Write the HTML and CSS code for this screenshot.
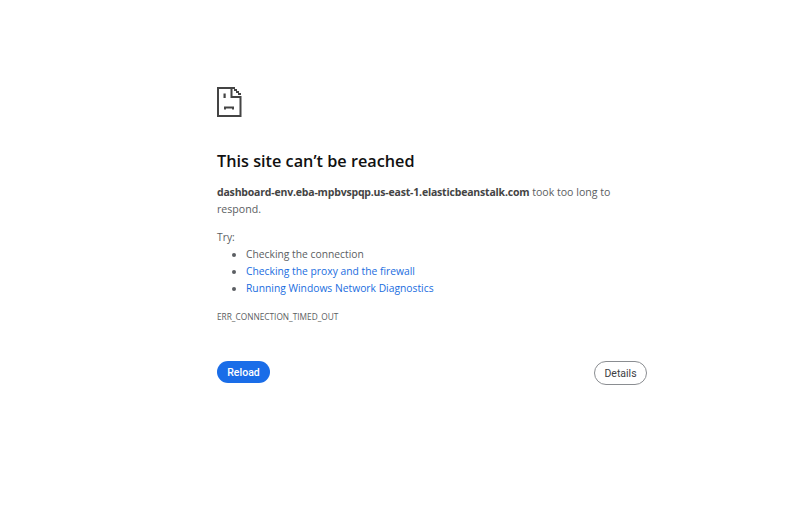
FILE: index.html
```html
<!DOCTYPE html>
<html lang="en">
<head>
    <meta charset="UTF-8">
    <meta name="viewport" content="width=device-width, initial-scale=1.0">
    <title>This site can't be reached</title>
    <link rel="stylesheet" href="styles.css">
</head>
<body>
    <div class="container">
        <svg class="error-icon" width="25" height="30" viewBox="0 0 25 30">
            <path d="M1 1H14.500V10H23.500V29H1Z" fill="none" stroke="#444" stroke-width="2"/>
            <path d="M15 1H17V3H19V5H21V7H23V10" fill="none" stroke="#444" stroke-width="2" stroke-dasharray="3 1"/>
            <rect x="6.500" y="6.500" width="2.200" height="4.500" fill="#444"/>
            <path d="M8 22.500V20.500H16V22.500" fill="none" stroke="#444" stroke-width="2"/>
        </svg>

        <h1>This site can’t be reached</h1>
        <p class="summary"><strong>dashboard-env.eba-mpbvspqp.us-east-1.elasticbeanstalk.com</strong> took too long to respond.</p>

        <div class="suggestions">
            <div class="try-label">Try:</div>
            <ul>
                <li>Checking the connection</li>
                <li><a href="#">Checking the proxy and the firewall</a></li>
                <li><a href="#">Running Windows Network Diagnostics</a></li>
            </ul>
        </div>

        <div class="error-code">ERR_CONNECTION_TIMED_OUT</div>

        <div class="buttons">
            <button class="reload">Reload</button>
            <button class="details">Details</button>
        </div>
    </div>
</body>
</html>
```

FILE: styles.css
```css
body {
    font-family: "Open Sans", "Noto Sans", sans-serif;
    background-color: white;
    margin: 0;
    padding: 0;
    color: #5b5e62;
}

.container {
    width: 430px;
    margin-left: 217px;
    padding-top: 87px;
}

.error-icon {
    display: block;
}

h1 {
    margin: 34px 0 0;
    font-size: 16.25px;
    line-height: 21px;
    font-weight: 600;
    color: #111;
}

.summary {
    margin: 12px 0 0;
    font-size: 10.6px;
    line-height: 17px;
}

.summary strong {
    color: #444;
    font-size: 10.5px;
    letter-spacing: -0.19px;
}

.suggestions {
    margin-top: 11px;
    font-size: 10.3px;
    line-height: 17px;
}

ul {
    margin: 0;
    padding-left: 29px;
}

a {
    color: #1a6de0;
    text-decoration: none;
}

.error-code {
    margin-top: 14px;
    font-size: 8.3px;
    line-height: 12px;
}

.buttons {
    display: flex;
    justify-content: space-between;
    align-items: flex-start;
    margin-top: 38px;
}

button {
    font-family: Roboto, sans-serif;
    font-size: 10.5px;
    font-weight: 500;
    border-radius: 12px;
    cursor: pointer;
}

.reload {
    width: 53px;
    height: 22px;
    background-color: #1a6de8;
    color: white;
    border: none;
}

.details {
    width: 53px;
    height: 24px;
    background-color: white;
    color: #3c4043;
    border: 1px solid #8a8d91;
    font-weight: 400;
}
```
